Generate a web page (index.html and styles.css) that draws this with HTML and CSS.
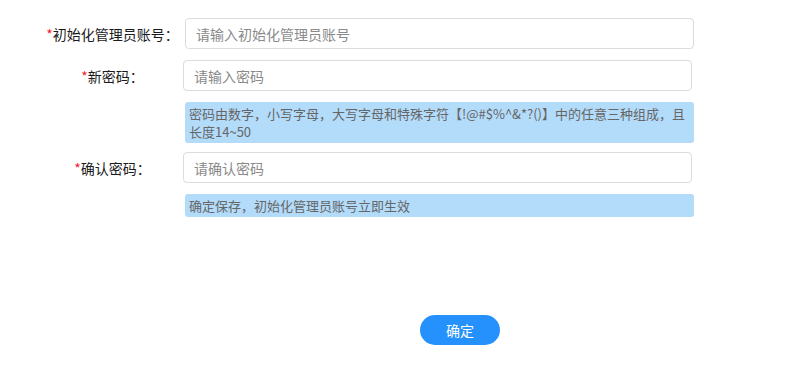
FILE: index.html
```html
<!DOCTYPE html>
<html lang="zh-CN">
<head>
    <meta charset="UTF-8">
    <meta name="viewport" content="width=device-width, initial-scale=1.0">
    <title>初始化管理员</title>
    <link rel="stylesheet" href="styles.css">
</head>
<body>
    <form class="init-form" onsubmit="return false;">
        <div class="form-row row-account">
            <label class="form-label" for="account"><span class="req">*</span>初始化管理员账号：</label>
            <input class="form-input" type="text" id="account" placeholder="请输入初始化管理员账号">
        </div>
        <div class="form-row row-password">
            <label class="form-label" for="password"><span class="req">*</span>新密码：</label>
            <input class="form-input shift" type="password" id="password" placeholder="请输入密码">
        </div>
        <div class="form-row row-tip">
            <div class="form-label"></div>
            <div class="tip">密码由数字，小写字母，大写字母和特殊字符【!@#$%^&amp;*?()】中的任意三种组成，且长度14~50</div>
        </div>
        <div class="form-row row-confirm">
            <label class="form-label" for="confirm"><span class="req">*</span>确认密码：</label>
            <input class="form-input shift" type="password" id="confirm" placeholder="请确认密码">
        </div>
        <div class="form-row row-tip">
            <div class="form-label"></div>
            <div class="tip">确定保存，初始化管理员账号立即生效</div>
        </div>
        <div class="actions">
            <button type="submit" class="btn-primary">确定</button>
        </div>
    </form>
</body>
</html>
```

FILE: styles.css
```css
body {
    margin: 0;
    font-family: "Microsoft YaHei", "Noto Sans CJK SC", sans-serif;
    font-size: 14px;
    color: #333;
    background-color: #fff;
}
.init-form {
    width: 700px;
    padding-top: 18px;
}
.form-row {
    display: flex;
    align-items: center;
    margin-bottom: 11px;
}
.row-tip {
    margin-bottom: 9px;
}
.form-label {
    width: 145px;
    margin-left: 40px;
    flex-shrink: 0;
    text-align: center;
    color: #1a1a1a;
}
.req {
    color: #f5222d;
}
.form-input {
    width: 509px;
    height: 31px;
    padding: 0 10px;
    border: 1px solid #dcdcdc;
    border-radius: 4px;
    box-sizing: border-box;
    font-family: inherit;
    font-size: 14px;
    color: #333;
    outline: none;
}
.form-input::placeholder {
    color: #8a8a8a;
}
.form-input.shift {
    margin-left: -2px;
}
.tip {
    width: 509px;
    box-sizing: border-box;
    padding: 3px 4px 2px;
    background-color: #b3dbfa;
    border-radius: 3px;
    font-size: 13px;
    line-height: 18px;
    color: #666;
}
.actions {
    display: flex;
    padding-top: 89px;
    padding-left: 420px;
}
.btn-primary {
    width: 80px;
    height: 30px;
    border: none;
    border-radius: 15px;
    background-color: #2491fc;
    color: #fff;
    font-family: inherit;
    font-size: 14px;
    cursor: pointer;
}
```
